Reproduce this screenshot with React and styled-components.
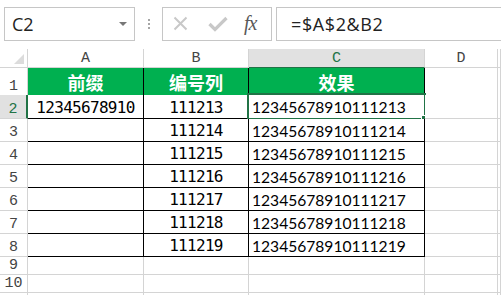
import React from 'react';
import styled, { createGlobalStyle } from 'styled-components';

const GlobalStyle = createGlobalStyle`
	html, body {
		margin: 0;
		padding: 0;
		background: #fff;
	}
`;

const Window = styled.div`
	width: 501px;
	height: 295px;
	overflow: hidden;
	background: #fff;
	font-family: 'Liberation Sans', sans-serif;
`;

const Toolbar = styled.div`
	display: flex;
	align-items: center;
	height: 49px;
	padding: 0 0 2px 4px;
	box-sizing: border-box;
`;

const NameBox = styled.div`
	display: flex;
	align-items: center;
	justify-content: space-between;
	width: 131px;
	height: 34px;
	box-sizing: border-box;
	border: 1px solid #c6c6c6;
	padding: 0 7px 0 7px;
	font-family: 'Open Sans', sans-serif;
	font-size: 18px;
	color: #222;
`;

const Caret = styled.span`
	width: 0;
	height: 0;
	border-left: 4px solid transparent;
	border-right: 4px solid transparent;
	border-top: 4px solid #777;
`;

const Dots = styled.div`
	display: flex;
	flex-direction: column;
	gap: 2px;
	margin: 0 12px 0 13px;
	span {
		width: 2px;
		height: 2px;
		background: #a6a6a6;
	}
`;

const FuncBox = styled.div`
	display: flex;
	align-items: center;
	width: 110px;
	height: 34px;
	box-sizing: border-box;
	border: 1px solid #c6c6c6;
	padding: 0 0 0 10px;
	svg + svg {
		margin-left: 20px;
	}
`;

const Fx = styled.span`
	font-family: 'Liberation Serif', serif;
	font-style: italic;
	font-size: 20px;
	color: #595959;
	margin-left: 16px;
	letter-spacing: -1px;
`;

const FormulaBox = styled.div`
	flex: 1;
	display: flex;
	align-items: center;
	height: 34px;
	margin-left: 4px;
	box-sizing: border-box;
	border: 1px solid #c6c6c6;
	border-right: none;
	padding-left: 14px;
	font-family: 'Open Sans', sans-serif;
	font-size: 18px;
	letter-spacing: 0.6px;
	color: #222;
`;

const Row = styled.div`
	display: grid;
	grid-template-columns: 28px 116px 105px 176px 73px 1fr;
	height: ${(p) => p.$h}px;
`;

const HeadCell = styled.div`
	position: relative;
	display: flex;
	align-items: flex-end;
	justify-content: center;
	box-sizing: border-box;
	padding-bottom: 1px;
	background: ${(p) => (p.$on ? '#e1e1e1' : '#fff')};
	border-right: 1px solid ${(p) => (p.$on && p.$side ? '#217346' : '#d4d4d4')};
	border-bottom: 1px solid ${(p) => (p.$on && !p.$side ? '#217346' : '#d4d4d4')};
	${(p) => p.$on && p.$side && 'border-right-width: 2px;'}
	font-family: 'Liberation Mono', monospace;
	font-size: 15px;
	color: ${(p) => (p.$on ? '#217346' : '#444')};
	line-height: 1;
`;

const Corner = styled(HeadCell)`
	&::after {
		content: '';
		position: absolute;
		right: 3px;
		bottom: 3px;
		border-left: 10px solid transparent;
		border-bottom: 10px solid #dcdcdc;
	}
`;

const Cell = styled.div`
	position: relative;
	display: flex;
	align-items: center;
	justify-content: ${(p) => (p.$left ? 'flex-start' : 'center')};
	box-sizing: border-box;
	padding-left: ${(p) => (p.$left ? '3px' : '0')};
	padding-top: 1px;
	background: ${(p) => (p.$green ? '#00b050' : '#fff')};
	border-right: 1px solid ${(p) => (p.$table ? '#000' : '#d4d4d4')};
	border-bottom: 1px solid ${(p) => (p.$table ? '#000' : '#d4d4d4')};
	color: ${(p) => (p.$green ? '#fff' : '#000')};
	font-family: ${(p) =>
		p.$green
			? "'Noto Sans CJK SC', sans-serif"
			: p.$left
			? "'Lato', 'Liberation Sans', sans-serif"
			: "'DejaVu Sans Mono', monospace"};
	font-size: ${(p) => (p.$green ? '18px' : p.$left ? '15.6px' : '16px')};
	font-weight: ${(p) => (p.$green ? 700 : 400)};
	letter-spacing: ${(p) => (!p.$green && !p.$left ? '-0.7px' : '0')};
	white-space: nowrap;
`;

const Selection = styled.div`
	position: absolute;
	left: -2px;
	top: -2px;
	right: -2px;
	bottom: -2px;
	border: 2px solid #217346;
	pointer-events: none;
	&::after {
		content: '';
		position: absolute;
		right: -4px;
		bottom: -4px;
		width: 5px;
		height: 5px;
		background: #217346;
		border: 1px solid #fff;
	}
`;

const XIcon = () => (
	<svg width="15" height="15" viewBox="0 0 15 15">
		<path d="M1.5 1.5 L13.5 13.5 M13.5 1.5 L1.5 13.5" stroke="#c8c8c8" strokeWidth="2" fill="none" />
	</svg>
);

const CheckIcon = () => (
	<svg width="20" height="16" viewBox="0 0 20 16">
		<path d="M1.5 8 L7 13.5 L18.5 2" stroke="#c8c8c8" strokeWidth="3.2" fill="none" />
	</svg>
);

const data = [
	{ n: 1, h: 27, a: '前缀', b: '编号列', c: '效果', head: true },
	{ n: 2, h: 24, a: '12345678910', b: '111213', c: '12345678910111213' },
	{ n: 3, h: 23, a: '', b: '111214', c: '12345678910111214' },
	{ n: 4, h: 23, a: '', b: '111215', c: '12345678910111215' },
	{ n: 5, h: 23, a: '', b: '111216', c: '12345678910111216' },
	{ n: 6, h: 23, a: '', b: '111217', c: '12345678910111217' },
	{ n: 7, h: 23, a: '', b: '111218', c: '12345678910111218' },
	{ n: 8, h: 23, a: '', b: '111219', c: '12345678910111219' },
	{ n: 9, h: 18 },
	{ n: 10, h: 18 },
	{ n: 11, h: 18, hidden: true },
];

const App = () => {
	return (
		<Window>
			<GlobalStyle />
			<Toolbar>
				<NameBox>
					C2
					<Caret />
				</NameBox>
				<Dots>
					<span />
					<span />
					<span />
				</Dots>
				<FuncBox>
					<XIcon />
					<CheckIcon />
					<Fx>fx</Fx>
				</FuncBox>
				<FormulaBox>=$A$2&amp;B2</FormulaBox>
			</Toolbar>
			<Row $h={19}>
				<Corner />
				<HeadCell>A</HeadCell>
				<HeadCell>B</HeadCell>
				<HeadCell $on>C</HeadCell>
				<HeadCell>D</HeadCell>
				<HeadCell />
			</Row>
			{data.map((r) => {
				const table = r.n <= 8;
				return (
					<Row key={r.n} $h={r.h}>
						<HeadCell $side $on={r.n === 2}>
							{r.hidden ? '' : r.n}
						</HeadCell>
						<Cell $table={table} $green={r.head}>
							{r.a}
						</Cell>
						<Cell $table={table} $green={r.head}>
							{r.b}
						</Cell>
						<Cell $table={table} $green={r.head} $left={!r.head}>
							{r.c}
							{r.n === 2 && <Selection />}
						</Cell>
						<Cell />
						<Cell />
					</Row>
				);
			})}
		</Window>
	);
};

export default App;
